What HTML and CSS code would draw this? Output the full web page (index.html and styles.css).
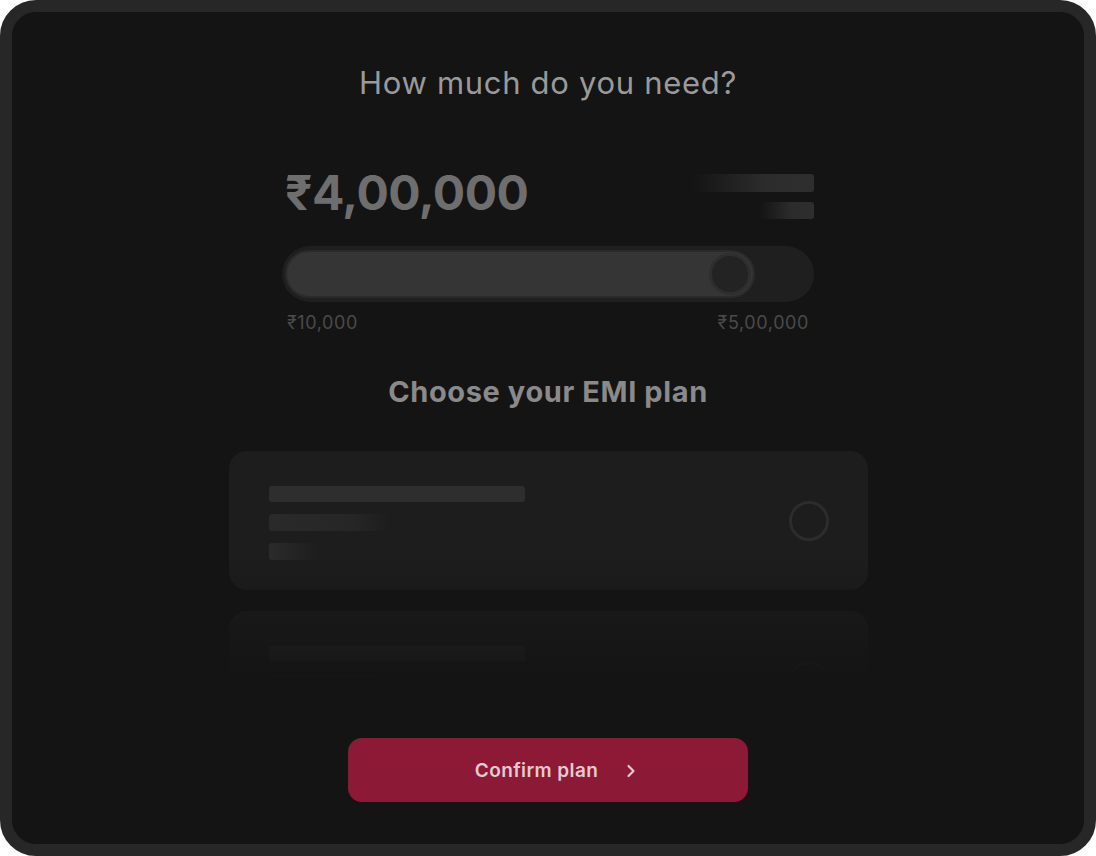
FILE: index.html
```html
<!DOCTYPE html>
<html lang="en">
<head>
  <meta charset="UTF-8">
  <meta name="viewport" content="width=device-width, initial-scale=1.0">
  <title>EMI Plan</title>
  <link rel="stylesheet" href="styles.css">
</head>
<body>
  <div class="device">
    <h1 class="title">How much do you need?</h1>

    <div class="amount-block">
      <div class="amount-row">
        <div class="amount">₹4,00,000</div>
        <div class="amount-meta">
          <span class="bar bar-long"></span>
          <span class="bar bar-short"></span>
        </div>
      </div>

      <div class="slider">
        <div class="slider-fill" style="width: 89.3%">
          <span class="slider-thumb"></span>
        </div>
      </div>
      <div class="slider-labels">
        <span>₹10,000</span>
        <span>₹5,00,000</span>
      </div>
    </div>

    <h2 class="subtitle">Choose your EMI plan</h2>

    <div class="plans">
      <div class="plan">
        <div class="plan-lines">
          <span class="line line-1"></span>
          <span class="line line-2"></span>
          <span class="line line-3"></span>
        </div>
        <span class="radio"></span>
      </div>
      <div class="plan">
        <div class="plan-lines">
          <span class="line line-1"></span>
          <span class="line line-2"></span>
          <span class="line line-3"></span>
        </div>
        <span class="radio"></span>
      </div>
    </div>

    <button class="confirm" type="button">
      Confirm plan
      <svg width="20" height="20" viewBox="0 0 24 24" fill="none" stroke="currentColor" stroke-width="2.6" stroke-linecap="round" stroke-linejoin="round"><path d="M9 6l6 6-6 6"/></svg>
    </button>
  </div>
</body>
</html>
```

FILE: styles.css
```css
* {
  box-sizing: border-box;
}
body {
  margin: 0;
  background: #ffffff;
  font-family: 'Inter', 'Noto Sans', sans-serif;
}
.device {
  height: 856px;
  border: 12px solid #272727;
  border-radius: 36px;
  background: #141414;
  display: flex;
  flex-direction: column;
  align-items: center;
  padding-top: 53px;
  overflow: hidden;
}
.title {
  margin: 0;
  font-size: 31px;
  line-height: 36px;
  font-weight: 400;
  letter-spacing: 0.7px;
  color: #9a9a9a;
}
.amount-block {
  width: 532px;
  margin-top: 64px;
}
.amount-row {
  display: flex;
  justify-content: space-between;
  align-items: flex-start;
  padding-left: 3px;
}
.amount {
  font-size: 48px;
  line-height: 56px;
  font-weight: 700;
  color: #6e6e6e;
  letter-spacing: -0.5px;
}
.amount-meta {
  display: flex;
  flex-direction: column;
  align-items: flex-end;
  gap: 10px;
  padding-top: 9px;
}
.bar {
  display: block;
  height: 18px;
  border-radius: 3px;
  background: linear-gradient(to right, rgba(46, 46, 46, 0), #2c2c2c 60%, #2e2e2e);
}
.bar-long {
  width: 122px;
}
.bar-short {
  width: 54px;
  height: 17px;
}
.slider {
  margin-top: 25px;
  height: 56px;
  border-radius: 28px;
  background: #1f1f1f;
  padding: 4px 3px;
}
.slider-fill {
  height: 100%;
  border-radius: 24px;
  background: #353535;
  border: 2px solid #2a2a2a;
  display: flex;
  align-items: center;
  justify-content: flex-end;
  padding-right: 2px;
}
.slider-thumb {
  width: 42px;
  height: 42px;
  border-radius: 50%;
  background: #232323;
  border: 3px solid #2e2e2e;
}
.slider-labels {
  display: flex;
  justify-content: space-between;
  padding: 0 5px;
  margin-top: 10px;
  font-size: 18px;
  line-height: 22px;
  letter-spacing: 0.6px;
  color: #4a4a4a;
}
.subtitle {
  margin: 41px 0 0;
  font-size: 29px;
  line-height: 34px;
  font-weight: 700;
  letter-spacing: 0.6px;
  color: #8a8a8a;
}
.plans {
  width: 639px;
  height: 250px;
  margin-top: 42px;
  display: flex;
  flex-direction: column;
  gap: 21px;
  overflow: hidden;
  -webkit-mask-image: linear-gradient(to bottom, #000 110px, transparent 230px);
  mask-image: linear-gradient(to bottom, #000 110px, transparent 230px);
}
.plan {
  flex: none;
  height: 139px;
  border-radius: 18px;
  background: #1d1d1d;
  display: flex;
  align-items: center;
  justify-content: space-between;
  padding: 0 39px 0 40px;
}
.plan-lines {
  display: flex;
  flex-direction: column;
  gap: 12px;
  margin-top: 4px;
}
.line {
  display: block;
  height: 17px;
  border-radius: 3px;
}
.line-1 {
  width: 256px;
  height: 16px;
  background: #2e2e2e;
}
.line-2 {
  width: 120px;
  background: linear-gradient(to right, #2a2a2a, #262626 70%, rgba(38, 38, 38, 0));
}
.line-3 {
  width: 50px;
  background: linear-gradient(to right, #2b2b2b, rgba(40, 40, 40, 0));
}
.radio {
  width: 40px;
  height: 40px;
  border-radius: 50%;
  border: 3px solid #2c2c2c;
}
.confirm {
  margin-top: 37px;
  width: 400px;
  height: 64px;
  border: none;
  border-radius: 14px;
  background: #8c1a37;
  color: #e6c9d0;
  font-family: inherit;
  font-size: 19px;
  font-weight: 600;
  letter-spacing: 0.4px;
  display: flex;
  align-items: center;
  justify-content: center;
  gap: 23px;
  padding-left: 26px;
  cursor: pointer;
}
.confirm svg {
  margin-top: 1px;
}
```
